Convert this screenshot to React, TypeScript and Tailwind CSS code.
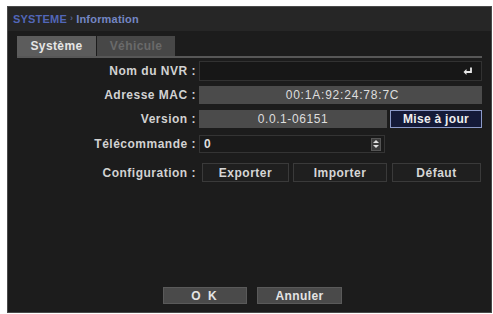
import React from "react";

const font = { fontFamily: '"Liberation Sans", Arial, sans-serif' };

function Label({ children }: { children: React.ReactNode }) {
  return (
    <div className="w-[182px] shrink-0 text-right pr-[3px] text-[12px] tracking-[0.5px] font-bold text-[#d2d2d2] leading-none whitespace-nowrap">
      {children}
    </div>
  );
}

function DarkBtn({ children, w }: { children: React.ReactNode; w: string }) {
  return (
    <div
      className={`${w} h-[19px] flex items-center justify-center bg-[#1f1f1f] border border-[#3a3a3a] text-[12px] tracking-[0.5px] font-bold text-[#d6d6d6]`}
    >
      {children}
    </div>
  );
}

export default function App() {
  return (
    <div className="w-[493px] h-[314px] bg-white pt-[6px] pl-[7px]" style={font}>
      <div className="w-[485px] h-[307px] border border-[#4a4a4a] bg-[#1c1c1c] flex flex-col">
        {/* title bar */}
        <div className="h-[24px] bg-[#262626] flex items-center pl-[5px] text-[11px] font-bold tracking-[0.2px]">
          <span className="text-[#5266b8]">SYSTEME</span>
          <span className="text-[#55608a] mx-[3px] text-[9px]">›</span>
          <span className="text-[#7486c4]">Information</span>
        </div>
        {/* tabs */}
        <div className="px-[9px] pt-[5px]">
          <div className="flex h-[20px]">
            <div className="w-[79px] bg-[#5c5c5c] flex items-center justify-center text-[12px] tracking-[0.4px] font-bold text-[#e6e6e6]">
              Système
            </div>
            <div className="w-[1px]" />
            <div className="w-[78px] bg-[#474747] flex items-center justify-center text-[12px] tracking-[0.4px] font-bold text-[#6a6a6a]">
              Véhicule
            </div>
          </div>
          <div className="h-[2px] bg-[#575757]" />
        </div>

        {/* form */}
        <div className="px-[9px] flex flex-col">
          {/* Nom du NVR */}
          <div className="flex items-center mt-[3px] h-[20px]">
            <Label>Nom du NVR :</Label>
            <div className="flex-1 h-[20px] bg-[#171717] border border-[#323232] flex items-center justify-end pr-[8px]">
              <svg width="10" height="9" viewBox="0 0 10 9">
                <path d="M8 0.5 V5 H2.5" stroke="#e8e8e8" strokeWidth="1.8" fill="none" />
                <path d="M0.5 5 L3.5 2 V8 Z" fill="#e8e8e8" />
              </svg>
            </div>
          </div>
          {/* MAC */}
          <div className="flex items-center mt-[5px] h-[18px]">
            <Label>Adresse MAC :</Label>
            <div className="flex-1 h-[18px] bg-[#4b4b4b] flex items-center justify-center text-[12px] tracking-[0.8px] text-[#dedede] pl-[4px]">
              00:1A:92:24:78:7C
            </div>
          </div>
          {/* Version */}
          <div className="flex items-center mt-[6px] h-[18px]">
            <Label>Version :</Label>
            <div className="w-[188px] h-[18px] bg-[#4b4b4b] flex items-center justify-center text-[12px] tracking-[0.6px] text-[#dedede]">
              0.0.1-06151
            </div>
            <div className="ml-[3px] flex-1 h-[18px] bg-[#141a38] border border-[#8c9ac8] flex items-center justify-center text-[12px] tracking-[0.3px] font-bold text-[#eeeeee]">
              Mise à jour
            </div>
          </div>
          {/* Télécommande */}
          <div className="flex items-center mt-[7px] h-[18px]">
            <Label>Télécommande :</Label>
            <div className="w-[186px] h-[18px] bg-[#1a1a1a] border border-[#343434] flex items-center justify-between pl-[4px] pr-[3px] text-[12px] font-bold text-[#dedede]">
              <span>0</span>
              <div className="w-[10px] h-[13px] bg-[#3a3a3a] border border-[#555] flex flex-col items-center justify-center gap-[2px]">
                <svg width="6" height="3" viewBox="0 0 6 3">
                  <path d="M0 3 L3 0 L6 3 Z" fill="#e0e0e0" />
                </svg>
                <svg width="6" height="3" viewBox="0 0 6 3">
                  <path d="M0 0 L3 3 L6 0 Z" fill="#e0e0e0" />
                </svg>
              </div>
            </div>
          </div>
          {/* Configuration */}
          <div className="flex items-center mt-[10px] h-[19px]">
            <Label>Configuration :</Label>
            <div className="ml-[3px] flex items-center gap-[4px]">
              <DarkBtn w="w-[87px]">Exporter</DarkBtn>
              <DarkBtn w="w-[94px]">Importer</DarkBtn>
            </div>
            <div className="ml-[5px]">
              <DarkBtn w="w-[89px]">Défaut</DarkBtn>
            </div>
          </div>
        </div>

        <div className="flex-1" />
        {/* bottom buttons */}
        <div className="flex justify-center gap-[10px] pl-[6px] pb-[8px]">
          <div className="w-[84px] h-[17px] bg-[#4a4a4a] border border-[#5a5a5a] flex items-center justify-center text-[12px] font-bold text-[#e4e4e4] tracking-[2px]">
            O K
          </div>
          <div className="w-[85px] h-[17px] bg-[#4a4a4a] border border-[#5a5a5a] flex items-center justify-center text-[12px] tracking-[0.4px] font-bold text-[#e4e4e4]">
            Annuler
          </div>
        </div>
      </div>
    </div>
  );
}
